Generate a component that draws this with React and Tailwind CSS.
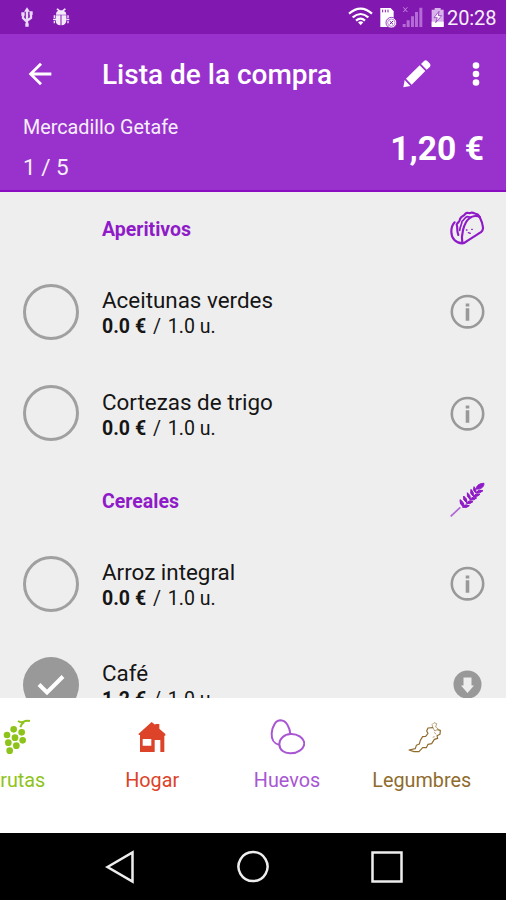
const sections = [
  {
    title: "Aperitivos",
    Icon: TacoIcon,
    items: [
      { name: "Aceitunas verdes", price: "0.0 €", amount: "1.0 u." },
      { name: "Cortezas de trigo", price: "0.0 €", amount: "1.0 u." },
    ],
  },
  {
    title: "Cereales",
    Icon: WheatIcon,
    items: [
      { name: "Arroz integral", price: "0.0 €", amount: "1.0 u." },
      { name: "Café", price: "1.2 €", amount: "1.0 u.", checked: true },
    ],
  },
];

const categories = [
  { name: "Frutas", Icon: GrapesIcon, color: "text-[#8ec31a]" },
  { name: "Hogar", Icon: HouseIcon, color: "text-[#dc4328]" },
  { name: "Huevos", Icon: EggsIcon, color: "text-[#a956d3]" },
  { name: "Legumbres", Icon: ChiliIcon, color: "text-[#8f6b2c]" },
];

function TacoIcon() {
  return (
    <svg className="size-9" viewBox="57 30 108 108" fill="none" stroke="currentColor" strokeWidth="6.5" strokeLinejoin="round" strokeLinecap="round">
      <path d="M97 130 C93 108 99 70 119 54 C129 47 142 46 149 51 C154 61 158 73 159 82 C160 90 155 96 147 100 L113 122 C107 127 101 130 97 130 C78 130 64 115 64 95 C64 84 68 73 74 67" />
      <path d="M85 105 C79 91 84 83 80 74 C84 64 89 68 90 57 C95 45 102 51 106 41 C113 34 117 43 124 38 C133 37 134 43 140 42 C146 43 146 47 149 51" />
      <path d="M89 91 C90 79 96 73 96 64 C103 59 104 52 111 50 L120 51" strokeWidth="5" />
      <path d="M109 90h2M125 88h2M115 98l6 2" strokeWidth="4" />
    </svg>
  );
}

function WheatIcon() {
  return (
    <svg className="size-9" viewBox="58 33 108 108" fill="currentColor" stroke="currentColor" strokeWidth="3">
      <path d="M63 136 L92 109" strokeWidth="5" opacity=".65" />
      <path d="M139 54 C141 42 151 37 163 37 C163 48 154 56 139 54Z" />
      <path d="M133 47 Q142 56 138 65 Q128 59 133 47ZM124 55 Q134 64 131 76 Q119 68 124 55ZM113 65 Q124 73 122 85 Q109 78 113 65ZM102 75 Q114 83 112 96 Q98 88 102 75ZM91 86 Q105 94 103 109 Q88 100 91 86Z" />
      <path d="M160 59 Q148 53 138 65 Q151 69 160 59ZM151 70 Q140 64 130 76 Q142 80 151 70ZM141 81 Q130 74 120 86 Q132 90 141 81ZM130 92 Q119 85 110 97 Q121 101 130 92ZM119 104 Q108 97 98 108 Q110 113 119 104Z" />
    </svg>
  );
}

function GrapesIcon() {
  return (
    <svg className="size-9 overflow-visible" viewBox="-2 238 108 108" fill="currentColor">
      <path d="M55 244 Q62 249 70 247 Q80 241 91 244 M74 247 Q65 252 62 263" fill="none" stroke="currentColor" strokeWidth="6" />
      <circle cx="42" cy="269" r="10" />
      <circle cx="22" cy="286" r="10" />
      <circle cx="66" cy="278" r="10" />
      <circle cx="46" cy="294" r="10" />
      <circle cx="26" cy="309" r="10" />
      <circle cx="69" cy="302" r="10" />
      <circle cx="50" cy="318" r="10" />
      <circle cx="30" cy="333" r="10" />
    </svg>
  );
}

function HouseIcon() {
  return (
    <svg className="size-9" viewBox="404 238 108 108" fill="currentColor">
      <path fillRule="evenodd" d="M418 282 L457 247 L468 256 V253 H480 V267 L498 283 V288 H495 V337 H483 V301 H466 V337 H422 V286 H418Z M430 298 V318 H456 V298Z" />
    </svg>
  );
}

function EggsIcon() {
  return (
    <svg className="size-9" viewBox="47 238 108 108" fill="none" stroke="currentColor" strokeWidth="6">
      <path d="M77 315 C62 312 54 298 55 281 C57 259 67 242 82 242 C99 243 109 263 111 283" />
      <path d="M112 283 C131 282 152 294 153 312 C151 329 132 341 112 341 C92 342 79 331 78 314 C78 297 92 284 112 283Z" />
    </svg>
  );
}

function ChiliIcon() {
  return (
    <svg className="size-9 overflow-visible" viewBox="451 238 108 108" fill="none" stroke="currentColor" strokeWidth="3.5" strokeLinejoin="round">
      <path d="M538 264 L523 265 L519 274 L523 281 L516 290 L507 291 L500 302 L497 313 L488 317 L485 327 L466 331 L481 336 L496 336 L507 324 L518 324 L523 314 L534 312 L542 299 L552 296 L550 288 L559 284 L560 272 L551 270" />
      <path d="M538 264 L535 255 L541 249 L549 252 L546 262 L555 269 M538 264 L543 274 L551 270 M542 278 L547 284 M543 291 L537 293" strokeWidth="2.5" opacity=".75" />
    </svg>
  );
}

function UsbIcon() {
  return (
    <svg className="h-[22px] w-[14px]" viewBox="60 18 42 66" fill="none" stroke="#e9d8f6" strokeWidth="7">
      <path d="M81 28 V76 M69 42 V54 L81 66 M93 38 V54 L81 62" />
      <path d="M81 22 L90 35 H72Z M76 70h10v10h-10z M64 37h10v10h-10z M89 34h9v10h-9z" fill="#e9d8f6" stroke="none" />
    </svg>
  );
}

function BugIcon() {
  return (
    <svg className="h-[22px] w-[18px]" viewBox="156 18 54 66" fill="#f3e9fa">
      <path d="M168 44 Q168 34 175 33 L169 28 L173 25 L180 31 H187 L194 25 L198 28 L192 33 Q199 35 199 44Z" />
      <path d="M167 46 H181.5 V76 Q167 74 167 62Z M184.500 46 H199 V62 Q198 74 184.500 76Z" />
      <path d="M163 46 V54 M168 58 H159 M163 62 V70 M204 46 V54 M199 58 H208 M204 62 V70" stroke="#f3e9fa" strokeWidth="4" />
    </svg>
  );
}

function WifiIcon() {
  return (
    <svg className="h-[22px] w-[25px]" viewBox="24 18 75 66" fill="none" stroke="#fff" strokeWidth="6.5">
      <path d="M27 41 Q62 11 96 41 M38 52 Q62 32 85 52 M48 62 Q62 50 75 62" />
      <path d="M54 67 Q62 61 70 67 L62 76Z" fill="#fff" stroke="none" />
    </svg>
  );
}

function SimIcon() {
  return (
    <svg className="ml-1.5 h-[22px] w-[18px]" viewBox="117 18 54 66">
      <path d="M121 24 H152 L161 34 V81 H121Z" fill="#fff" />
      <path d="M128 29v8M136 29v8M144 29v8" stroke="#8119b0" strokeWidth="3" />
      <circle cx="154" cy="68" r="16" fill="#fff" stroke="#8119b0" strokeWidth="2.5" />
      <circle cx="154" cy="68" r="11" fill="none" stroke="#8119b0" strokeWidth="1.5" />
      <path d="M149 63l10 10M159 63l-10 10" stroke="#8119b0" strokeWidth="3" />
    </svg>
  );
}

function SignalIcon() {
  return (
    <svg className="ml-[5px] h-[22px] w-[21px]" viewBox="186 18 63 66" fill="#b56bd6">
      <path d="M188 72h9v9h-9zM200 61h9v20h-9zM213 49h9v32h-9zM225 36h9v45h-9zM238 23h9v58h-9z" />
      <path d="M190 22l12 14M202 22l-12 14" stroke="#c58be0" strokeWidth="3" />
    </svg>
  );
}

function BatteryIcon() {
  return (
    <svg className="ml-[7px] h-[22px] w-[15px]" viewBox="270 18 45 66">
      <path d="M284 24h18v5h9v51h-36V29h9z" fill="#d9b4ea" />
      <path d="M275 65h36v16h-36z" fill="#fff" />
      <path d="M297 34 L282 53 H292 L287 68 L305 47 H295Z" fill="#fff" stroke="#8119b0" strokeWidth="2" />
    </svg>
  );
}

function StatusBar() {
  return (
    <div className="flex h-[34px] items-center bg-[#8119b0] pr-[9px] pl-5">
      <UsbIcon />
      <span className="ml-[18px] flex">
        <BugIcon />
      </span>
      <div className="ml-auto flex items-center">
        <WifiIcon />
        <SimIcon />
        <SignalIcon />
        <BatteryIcon />
        <span className="ml-0.5 w-[50px] pt-px text-[20px] leading-[22px] tracking-[-0.1px] whitespace-nowrap text-[#f8effc]">20:28</span>
      </div>
    </div>
  );
}

function Header() {
  return (
    <header className="h-[158px] border-b-2 border-[#8a0cc0] bg-[#9932cc] text-white">
      <div className="flex h-20 items-center pr-5 pl-[23px]">
        <svg className="size-[34px]" viewBox="0 0 24 24" fill="currentColor">
          <path d="M20 11H7.83l5.59-5.59L12 4l-8 8 8 8 1.41-1.41L7.83 13H20v-2z" />
        </svg>
        <h1 className="ml-[45px] pt-0.5 text-[28px] font-medium whitespace-nowrap">Lista de la compra</h1>
        <svg className="ml-auto size-[30px]" viewBox="186 176 90 90" fill="currentColor">
          <path d="M190 261 L194 239 L211 257Z M198 235 L239 195 L256 212 L215 253Z M243 191 L252 182 Q257 178 262 182 L270 190 Q273 194 270 199 L260 208Z" />
        </svg>
        <svg className="ml-[34px] h-[30px] w-5" viewBox="0 0 20 30" fill="currentColor">
          <circle cx="10" cy="6.500" r="3.300" />
          <circle cx="10" cy="15" r="3.300" />
          <circle cx="10" cy="23.500" r="3.300" />
        </svg>
      </div>
      <div className="flex items-center justify-between pr-[22px] pl-[23px]">
        <div className="text-[#f7eefb]">
          <p className="text-[19.75px] leading-[27px]">Mercadillo Getafe</p>
          <p className="mt-[13px] text-[22.5px] leading-[26px]">1 / 5</p>
        </div>
        <p className="mt-1 text-[33.6px] leading-10 font-bold">1,20 €</p>
      </div>
    </header>
  );
}

function Item({ item }) {
  return (
    <li className="flex h-[101.3px] items-center pr-[21px] pl-[23px]">
      {item.checked ? (
        <span className="flex size-14 items-center justify-center rounded-full bg-[#999]">
          <svg className="size-7" viewBox="0 0 28 28" fill="none" stroke="#fff" strokeWidth="4">
            <path d="M2 13.500 L10 21.500 L26 5.500" />
          </svg>
        </span>
      ) : (
        <span className="size-14 rounded-full border-3 border-[#a0a0a0]" />
      )}
      <div className="ml-[23px] pt-1 text-[#151515]">
        <p className="text-[22.4px] leading-[27px] whitespace-nowrap">{item.name}</p>
        <p className="text-[19.5px] leading-[26px] whitespace-nowrap">
          <b>{item.price}</b> <span className="mx-0.5">/</span> {item.amount}
        </p>
      </div>
      <svg className="ml-auto size-[35px]" viewBox="0 0 35 35">
        {item.checked ? (
          <>
            <circle cx="17.500" cy="17.500" r="14" fill="#999" />
            <path d="M13.500 10.500h8v8h2.500l-6.500 7.500-6.500-7.500h2.500z" fill="#eee" />
          </>
        ) : (
          <>
            <circle cx="17.500" cy="17.700" r="15.700" fill="none" stroke="#999" strokeWidth="2.600" />
            <path d="M15.700 9.400h3.600v3h-3.600zM15.700 14.200h3.600v12.500h-3.600z" fill="#999" />
          </>
        )}
      </svg>
    </li>
  );
}

function ShoppingList() {
  return (
    <main className="h-[506px] overflow-hidden bg-[#eee]">
      {sections.map(({ title, Icon, items }) => (
        <section key={title}>
          <div className="flex h-[69.2px] items-center justify-between pt-[3px] pr-[21px] pl-[102px] text-[#8f1bc8]">
            <h2 className="pt-[3px] text-[19.5px] font-bold">{title}</h2>
            <Icon />
          </div>
          <ul>
            {items.map((item) => (
              <Item key={item.name} item={item} />
            ))}
          </ul>
        </section>
      ))}
    </main>
  );
}

function CategoryBar() {
  return (
    <nav className="flex h-[135px] overflow-hidden bg-white">
      <div className="-ml-[50px] flex">
        {categories.map(({ name, Icon, color }) => (
          <div key={name} className={`flex w-[134.8px] flex-col items-center pt-[21px] ${color}`}>
            <Icon />
            <span className="mt-3 text-[19.8px] leading-[27px]">{name}</span>
          </div>
        ))}
      </div>
    </nav>
  );
}

function SystemNav() {
  return (
    <div className="flex h-[67px] items-center justify-between bg-black px-[101px]">
      {["M6.500 18 L31.500 3.500 V32.500Z", "M18 3 a14.500 14.500 0 1 0 .01 0Z", "M3.500 3.500h29v29h-29z"].map((d) => (
        <svg key={d} className="size-9" viewBox="0 0 36 36" fill="none" stroke="#eee" strokeWidth="2.500">
          <path d={d} />
        </svg>
      ))}
    </div>
  );
}

export default function App() {
  return (
    <div className="h-[900px] w-[506px] overflow-hidden bg-white font-[Roboto,sans-serif]">
      <StatusBar />
      <Header />
      <ShoppingList />
      <CategoryBar />
      <SystemNav />
    </div>
  );
}
